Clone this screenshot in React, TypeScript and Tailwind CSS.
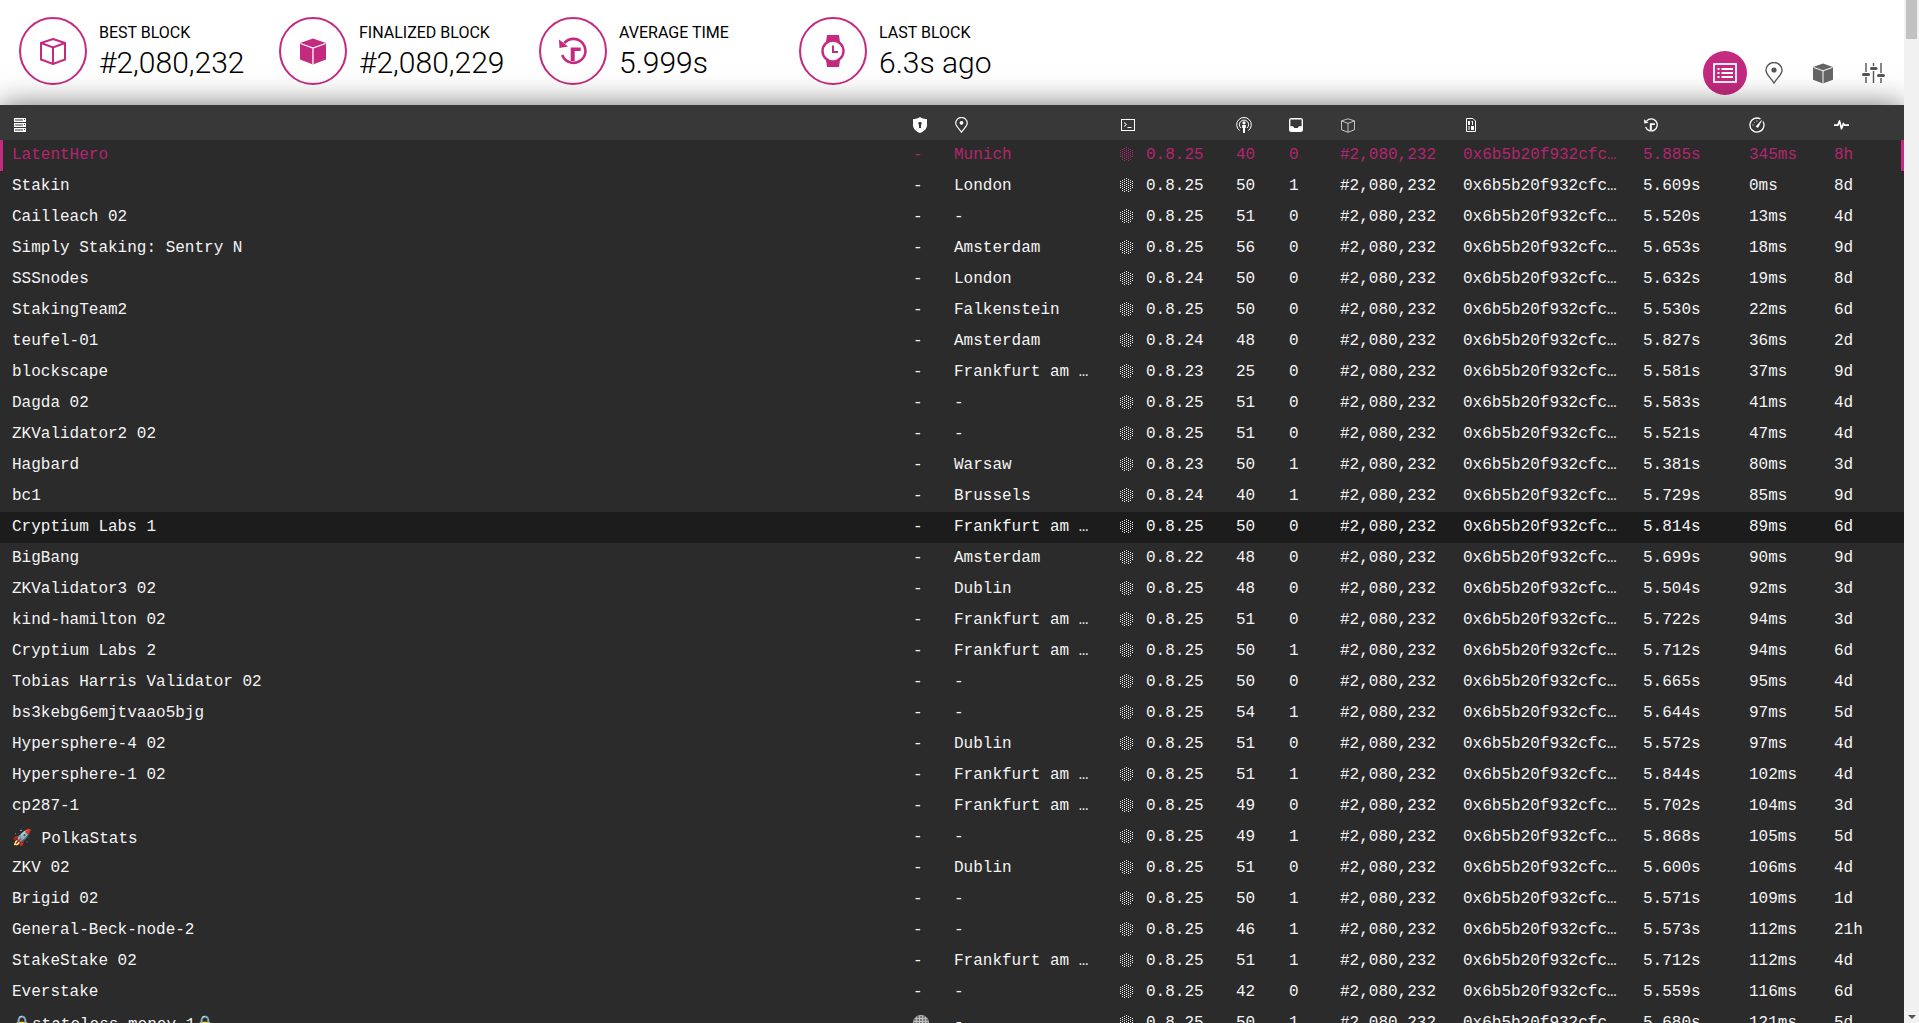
import React from 'react';

const PINK = '#c42a7f';

type Node = [string, string, string, number, number, string, string, string];

const FRA = 'Frankfurt am …';

const nodes: Node[] = [
    ['LatentHero', 'Munich', '0.8.25', 40, 0, '5.885s', '345ms', '8h'],
    ['Stakin', 'London', '0.8.25', 50, 1, '5.609s', '0ms', '8d'],
    ['Cailleach 02', '-', '0.8.25', 51, 0, '5.520s', '13ms', '4d'],
    ['Simply Staking: Sentry N', 'Amsterdam', '0.8.25', 56, 0, '5.653s', '18ms', '9d'],
    ['SSSnodes', 'London', '0.8.24', 50, 0, '5.632s', '19ms', '8d'],
    ['StakingTeam2', 'Falkenstein', '0.8.25', 50, 0, '5.530s', '22ms', '6d'],
    ['teufel-01', 'Amsterdam', '0.8.24', 48, 0, '5.827s', '36ms', '2d'],
    ['blockscape', FRA, '0.8.23', 25, 0, '5.581s', '37ms', '9d'],
    ['Dagda 02', '-', '0.8.25', 51, 0, '5.583s', '41ms', '4d'],
    ['ZKValidator2 02', '-', '0.8.25', 51, 0, '5.521s', '47ms', '4d'],
    ['Hagbard', 'Warsaw', '0.8.23', 50, 1, '5.381s', '80ms', '3d'],
    ['bc1', 'Brussels', '0.8.24', 40, 1, '5.729s', '85ms', '9d'],
    ['Cryptium Labs 1', FRA, '0.8.25', 50, 0, '5.814s', '89ms', '6d'],
    ['BigBang', 'Amsterdam', '0.8.22', 48, 0, '5.699s', '90ms', '9d'],
    ['ZKValidator3 02', 'Dublin', '0.8.25', 48, 0, '5.504s', '92ms', '3d'],
    ['kind-hamilton 02', FRA, '0.8.25', 51, 0, '5.722s', '94ms', '3d'],
    ['Cryptium Labs 2', FRA, '0.8.25', 50, 1, '5.712s', '94ms', '6d'],
    ['Tobias Harris Validator 02', '-', '0.8.25', 50, 0, '5.665s', '95ms', '4d'],
    ['bs3kebg6emjtvaao5bjg', '-', '0.8.25', 54, 1, '5.644s', '97ms', '5d'],
    ['Hypersphere-4 02', 'Dublin', '0.8.25', 51, 0, '5.572s', '97ms', '4d'],
    ['Hypersphere-1 02', FRA, '0.8.25', 51, 1, '5.844s', '102ms', '4d'],
    ['cp287-1', FRA, '0.8.25', 49, 0, '5.702s', '104ms', '3d'],
    ['🚀 PolkaStats', '-', '0.8.25', 49, 1, '5.868s', '105ms', '5d'],
    ['ZKV 02', 'Dublin', '0.8.25', 51, 0, '5.600s', '106ms', '4d'],
    ['Brigid 02', '-', '0.8.25', 50, 1, '5.571s', '109ms', '1d'],
    ['General-Beck-node-2', '-', '0.8.25', 46, 1, '5.573s', '112ms', '21h'],
    ['StakeStake 02', FRA, '0.8.25', 51, 1, '5.712s', '112ms', '4d'],
    ['Everstake', '-', '0.8.25', 42, 0, '5.559s', '116ms', '6d'],
    ['🔒stateless money 1🔒', '-', '0.8.25', 50, 1, '5.680s', '121ms', '5d'],
];

// @ icons
const CubeLine = ({ className = '', sw = 2 }: { className?: string; sw?: number }) => (
    <svg viewBox="0 0 26 27" className={className} fill="none" stroke="currentColor" strokeWidth={sw}>
        <path d="M13 1 L25 5 V21.5 L13 26 L1 21.5 V5 Z" />
        <path d="M1 5 L13 9.5 L25 5 M13 9.5 V26" />
    </svg>
);

const CubeSolid = ({ className = '' }: { className?: string }) => (
    <svg viewBox="0 0 26 27" className={className}>
        <path d="M13 0.5 L26 5 V21.5 L13 26.5 L0 21.5 V5 Z" fill="currentColor" />
        <path d="M0.5 5.5 L13 10 L25.5 5.5 M13 10 V26.5" fill="none" stroke="#fff" strokeWidth="1.3" />
    </svg>
);

const Replay = ({ className = '' }: { className?: string }) => (
    <svg viewBox="0 0 28 28" className={className}>
        <path d="M5.2 6.2 A12 12 0 1 1 3.2 18" fill="none" stroke="currentColor" strokeWidth="2.6" />
        <path d="M0 2.5 L0.5 11 L9 9.5 Z" fill="currentColor" />
        <path d="M11.7 10.5 H21.7 V14 H15.7 V24 H11.7 Z" fill="currentColor" />
    </svg>
);

const Watch = ({ className = '' }: { className?: string }) => (
    <svg viewBox="0 0 24 32" className={className}>
        <path d="M6 0 H18 L19 7 H5 Z M5 25 H19 L18 32 H6 Z" fill="currentColor" />
        <circle cx="12" cy="16" r="10.5" fill="#fff" stroke="currentColor" strokeWidth="2.4" />
        <path d="M12 10.5 V17 H17" fill="none" stroke="currentColor" strokeWidth="2" />
    </svg>
);

const Pin = ({ className = '', sw = 1.4 }: { className?: string; sw?: number }) => (
    <svg viewBox="0 0 18 22" className={className} fill="none" stroke="currentColor" strokeWidth={sw}>
        <path d="M9 21 C6 16 1 12.5 1 8.5 A8 8 0 0 1 17 8.5 C17 12.5 12 16 9 21 Z" />
        <circle cx="9" cy="8" r="2.6" fill="currentColor" stroke="none" />
    </svg>
);

const Sliders = ({ className = '' }: { className?: string }) => (
    <svg viewBox="0 0 23 20" className={className}>
        <path d="M4 0 V9 M4 14 V20 M11.5 0 V3 M11.5 8 V20 M19 0 V10 M19 15 V20" stroke="currentColor" strokeWidth="1.4" fill="none" />
        <rect x="0" y="10" width="8" height="3" rx="1.5" fill="currentColor" />
        <rect x="8" y="4" width="7.5" height="3" rx="1.5" fill="currentColor" />
        <rect x="15" y="11" width="8" height="3" rx="1.5" fill="currentColor" />
    </svg>
);

const ListCard = ({ className = '' }: { className?: string }) => (
    <svg viewBox="0 0 24 20" className={className}>
        <rect x="1" y="1" width="22" height="18" fill="none" stroke="currentColor" strokeWidth="1.8" />
        <path d="M4.5 5 H6.5 V7 H4.5 Z M4.5 9 H6.5 V11 H4.5 Z M4.5 13 H6.5 V15 H4.5 Z" fill="currentColor" />
        <path d="M8.5 6 H20 M8.5 10 H20 M8.5 14 H20" stroke="currentColor" strokeWidth="1.8" />
    </svg>
);

const Servers = ({ className = '' }: { className?: string }) => (
    <svg viewBox="0 0 12 14" className={className}>
        {[0, 5, 10].map((y) => (
            <g key={y}>
                <rect x="0" y={y} width="12" height="4" fill="#fff" />
                {[1.5, 3.5, 5.5, 7.5].map((x) => (
                    <rect key={x} x={x} y={y + 1} width="1" height="2" fill="#383838" />
                ))}
                <rect x="10" y={y + 1} width="1" height="1" fill="#383838" />
            </g>
        ))}
    </svg>
);

const Shield = ({ className = '' }: { className?: string }) => (
    <svg viewBox="0 0 14 16" className={className}>
        <path d="M7 0 C9 1.4 11.5 2 14 2 V8 C14 12 10.5 14.6 7 16 C3.5 14.6 0 12 0 8 V2 C2.5 2 5 1.4 7 0 Z" fill="#fff" />
        <circle cx="7" cy="6.4" r="1.7" fill="#383838" />
        <rect x="6" y="7" width="2" height="4" fill="#383838" />
    </svg>
);

const Terminal = ({ className = '' }: { className?: string }) => (
    <svg viewBox="0 0 14 12" className={className} fill="none" stroke="#fff">
        <rect x="0.5" y="0.5" width="13" height="11" />
        <path d="M3 3.5 L5.5 5.5 L3 7.5 M6.5 8.5 H10.5" />
    </svg>
);

const Antenna = ({ className = '' }: { className?: string }) => (
    <svg viewBox="0 0 16 16" className={className} fill="none" stroke="#fff">
        <path d="M3.5 13.5 A7.3 7.3 0 1 1 12.5 13.5" />
        <path d="M4.8 11 A4.6 4.6 0 1 1 11.2 11" />
        <circle cx="8" cy="5.8" r="1.6" fill="#fff" stroke="none" />
        <path d="M6.2 8 H9.8 V11 H9 V16 H7 V11 H6.2 Z" fill="#fff" stroke="none" />
    </svg>
);

const Inbox = ({ className = '' }: { className?: string }) => (
    <svg viewBox="0 0 12 12" className={className}>
        <path d="M2 0 H10 A2 2 0 0 1 12 2 V10 A2 2 0 0 1 10 12 H2 A2 2 0 0 1 0 10 V2 A2 2 0 0 1 2 0 Z" fill="#fff" />
        <path d="M1.2 1.2 H10.8 V7 H8.5 L7.5 8.5 H4.5 L3.5 7 H1.2 Z" fill="#383838" />
    </svg>
);

const BinaryFile = ({ className = '' }: { className?: string }) => (
    <svg viewBox="0 0 10 14" className={className}>
        <path d="M0.5 0.5 H7 L9.5 3 V13.5 H0.5 Z" fill="none" stroke="#fff" />
        <path d="M2 3 H4 V7 H2 Z M3 4 V6 M5.5 3 H7 V7 H6 V4 H5.5 Z M2.5 8 H3.5 V12 H2.5 Z M5 8 H8 V12 H5 Z" fill="#fff" fillRule="evenodd" />
    </svg>
);

const Gauge = ({ className = '' }: { className?: string }) => (
    <svg viewBox="0 0 16 16" className={className} fill="none" stroke="#fff">
        <path d="M11.5 2 A7 7 0 1 0 14 4.5" strokeWidth="1.3" />
        <path d="M7 9.5 L12.5 3.5 L9 10.5 Z" fill="#fff" strokeWidth="0.6" />
        <path d="M3.5 8 H4.5 M5 5 L5.6 5.6 M8 3.5 V4.5" strokeWidth="1" />
    </svg>
);

const Pulse = ({ className = '' }: { className?: string }) => (
    <svg viewBox="0 0 15 10" className={className}>
        <path d="M0 5.2 H3.8 L5.5 1 L7.5 8.8 L9.4 3.5 L10.6 5.2 H15" fill="none" stroke="#fff" strokeWidth="1.7" strokeLinejoin="round" />
    </svg>
);

// @ dotted cluster in front of the node version: staggered columns of single pixels
const dots: [number, number][] = [];
for (let col = 0; col < 7; col++) {
    for (let row = 0; row < 8; row++) {
        const x = col * 2;
        const y = col % 2 === 1 ? row * 2 : 1 + row * 2;
        if (Math.hypot(x - 6, y - 6.5) < 7) dots.push([x, y]);
    }
}

const DotCluster = ({ className = '' }: { className?: string }) => (
    <svg viewBox="0 0 14 14" className={className} shapeRendering="crispEdges">
        {dots.map(([x, y]) => (
            <rect key={`${x}-${y}`} x={x} y={y} width={1} height={1} fill="currentColor" />
        ))}
    </svg>
);

const Globe = ({ className = '' }: { className?: string }) => (
    <svg viewBox="0 0 16 16" className={className}>
        <circle cx="8" cy="8" r="8" fill="#bbbbbb" />
        {[2, 5, 8, 11, 14].map((x) =>
            [2, 5, 8, 11, 14].map((y) => <circle key={`${x}-${y}`} cx={x} cy={y} r={0.8} fill="#2b2b2b" />)
        )}
        <circle cx="8" cy="13" r="1.8" fill={PINK} />
    </svg>
);

interface StatProps {
    label: string;
    value: string;
    icon: React.ReactNode;
}

const Stat: React.FC<StatProps> = ({ label, value, icon }) => (
    <div className="flex w-[260px] items-start gap-[12px] pl-[19px]">
        <div className="flex size-[68px] shrink-0 items-center justify-center rounded-full border-2 border-[#c42a7f] text-[#c42a7f]">
            {icon}
        </div>
        <div className="pt-[6px]">
            <div className="text-[16px] leading-[20px] text-black uppercase">{label}</div>
            <div className="text-[30px] leading-[40px] font-light text-black">{value}</div>
        </div>
    </div>
);

const App: React.FC = () => {
    return (
        <div className="flex h-screen overflow-hidden bg-[#f1f1f1] font-['Roboto',sans-serif]">
            <main className="flex w-[1904px] flex-col bg-white">
                {/* Top stats */}
                <header className="flex h-[105px] shrink-0 items-start pt-[17px]">
                    <Stat label="Best block" value="#2,080,232" icon={<CubeLine className="h-[27px] w-[26px]" />} />
                    <Stat label="Finalized block" value="#2,080,229" icon={<CubeSolid className="h-[27px] w-[26px]" />} />
                    <Stat label="Average time" value="5.999s" icon={<Replay className="size-[28px]" />} />
                    <Stat label="Last block" value="6.3s ago" icon={<Watch className="h-[32px] w-[24px]" />} />
                    <nav className="mt-[34px] ml-auto flex items-center pr-[6px] text-[#555]">
                        <button className="mr-[3px] flex size-[44px] items-center justify-center rounded-full bg-[#c42a7f] text-white">
                            <ListCard className="h-[20px] w-[24px]" />
                        </button>
                        <button className="flex h-[44px] w-[48px] items-center justify-center">
                            <Pin className="h-[22px] w-[18px]" />
                        </button>
                        <button className="flex h-[44px] w-[50px] items-center justify-center text-[#666]">
                            <CubeSolid className="h-[21px] w-[20px]" />
                        </button>
                        <button className="flex h-[44px] w-[50px] items-center justify-center">
                            <Sliders className="h-[20px] w-[23px]" />
                        </button>
                    </nav>
                </header>

                {/* Node table */}
                <div className="relative min-h-0 flex-1 overflow-visible bg-[#2b2b2b] shadow-[0_0_28px_rgba(0,0,0,0.55)]">
                    <table className="w-full table-fixed font-['Liberation_Mono',monospace] text-[16px] text-[#f4f4f4]">
                        <colgroup>
                            <col className="w-[901px]" />
                            <col className="w-[41px]" />
                            <col className="w-[166px]" />
                            <col className="w-[116px]" />
                            <col className="w-[53px]" />
                            <col className="w-[51px]" />
                            <col className="w-[123px]" />
                            <col className="w-[180px]" />
                            <col className="w-[106px]" />
                            <col className="w-[85px]" />
                            <col className="w-[82px]" />
                        </colgroup>
                        <thead>
                            <tr className="h-[35px] bg-[#383838]">
                                <th className="pt-[5px] pl-[14px]"><Servers className="h-[14px] w-[12px]" /></th>
                                <th className="pt-[5px] pl-3"><Shield className="h-[16px] w-[14px]" /></th>
                                <th className="pt-[5px] pl-[13px] text-white"><Pin className="h-[16px] w-[13px]" sw={1.6} /></th>
                                <th className="pt-[5px] pl-[13px]"><Terminal className="h-[12px] w-[14px]" /></th>
                                <th className="pt-[5px] pl-3"><Antenna className="size-[16px]" /></th>
                                <th className="pt-[5px] pl-3"><Inbox className="size-[14px]" /></th>
                                <th className="pt-[5px] pl-[13px] text-[#ddd]"><CubeLine className="h-[15px] w-[14px]" sw={1.6} /></th>
                                <th className="pt-[5px] pl-[14px]"><BinaryFile className="h-[14px] w-[12px]" /></th>
                                <th className="pt-[5px] pl-[13px]"><Replay className="size-[14px] text-white" /></th>
                                <th className="pt-[5px] pl-3"><Gauge className="size-[16px]" /></th>
                                <th className="pt-[5px] pl-3"><Pulse className="h-[10px] w-[15px]" /></th>
                            </tr>
                        </thead>
                        <tbody>
                            {nodes.map((node, index) => {
                                const active = index === 0;
                                const hovered = index === 12;
                                const stateless = index === 28;
                                // the emoji names sit a little lower in the row
                                const nameOffset = index === 22 || stateless ? 'pt-[2px]' : 'pb-[2px]';
                                return (
                                    <tr
                                        key={node[0]}
                                        className={`h-[31px] ${hovered ? 'bg-[#1c1c1c]' : ''} ${active ? 'text-[#b5256f]' : ''}`}
                                    >
                                        <td className={`overflow-hidden pl-3 whitespace-nowrap ${nameOffset} ${active ? 'shadow-[inset_3px_0_0_#c42a7f]' : ''}`}>
                                            {node[0]}
                                        </td>
                                        <td className="pb-[2px] pl-3">
                                            {stateless ? <Globe className="size-[16px]" /> : '-'}
                                        </td>
                                        <td className="truncate pb-[2px] pl-3">{node[1]}</td>
                                        <td className="pb-[2px] pl-3 whitespace-nowrap">
                                            <span className="flex items-center gap-[12px]">
                                                <DotCluster className="-mt-[1px] size-[14px] shrink-0" />
                                                {node[2]}
                                            </span>
                                        </td>
                                        <td className="pb-[2px] pl-3">{node[3]}</td>
                                        <td className="pb-[2px] pl-3">{node[4]}</td>
                                        <td className="pb-[2px] pl-3">#2,080,232</td>
                                        <td className="truncate pb-[2px] pl-3">0x6b5b20f932cfc…</td>
                                        <td className="pb-[2px] pl-3">{node[5]}</td>
                                        <td className="pb-[2px] pl-3">{node[6]}</td>
                                        <td className={`pb-[2px] pl-3 ${active ? 'shadow-[inset_-3px_0_0_#c42a7f]' : ''}`}>{node[7]}</td>
                                    </tr>
                                );
                            })}
                        </tbody>
                    </table>
                </div>
            </main>

            {/* Page scrollbar */}
            <aside className="relative z-10 flex w-[15px] shrink-0 flex-col items-center justify-between bg-[#f1f1f1]">
                <div className="h-[39px] w-[11px] bg-[#c1c1c1]" />
                <div className="mb-[4px] h-0 w-0 border-x-[4px] border-t-[4px] border-x-transparent border-t-[#505050]" />
            </aside>
        </div>
    );
};

export default App;
